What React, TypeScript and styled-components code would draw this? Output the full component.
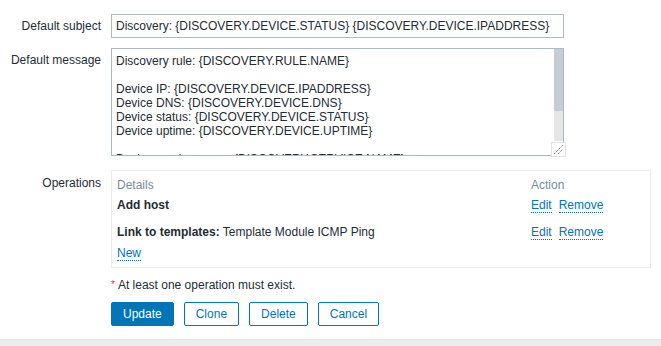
import React from 'react';
import styled, { createGlobalStyle } from 'styled-components';

const GlobalStyle = createGlobalStyle`
  html, body {
    margin: 0;
    padding: 0;
    background: #ffffff;
  }
  body {
    font-family: "Liberation Sans", Arial, sans-serif;
    font-size: 12px;
    color: #1f2c33;
  }
`;

const Page = styled.div`
  display: flex;
  flex-direction: column;
  min-height: 346px;
`;

const FormList = styled.div`
  display: flex;
  flex-direction: column;
  padding-top: 14px;
`;

const Row = styled.div<{ $mb?: number }>`
  display: grid;
  grid-template-columns: 101px 1fr;
  column-gap: 10px;
  margin-bottom: ${(p) => p.$mb ?? 0}px;
`;

const Label = styled.label<{ $pt?: number }>`
  text-align: right;
  line-height: 14px;
  padding-top: ${(p) => p.$pt ?? 5}px;
  white-space: nowrap;
`;

const TextInput = styled.input`
  box-sizing: border-box;
  width: 453px;
  height: 24px;
  margin: 0;
  padding: 0 4px;
  border: 1px solid #acbbc2;
  border-radius: 0;
  font-family: inherit;
  font-size: 12px;
  color: #1f2c33;
  background: #fff;
  outline: none;
`;

const TextAreaFrame = styled.div`
  position: relative;
  display: flex;
  box-sizing: border-box;
  width: 453px;
  height: 108px;
  border: 1px solid #acbbc2;
  background: #fff;
`;

const TextArea = styled.textarea`
  flex: 1;
  min-width: 0;
  margin: 0;
  padding: 5px 4px;
  border: none;
  font-family: inherit;
  font-size: 12px;
  line-height: 14px;
  color: #1f2c33;
  background: transparent;
  overflow: hidden;
  resize: none;
  outline: none;
`;

const ScrollBar = styled.div`
  display: flex;
  flex-direction: column;
  width: 9px;
`;

const ScrollThumb = styled.div`
  height: 62px;
  background: #c3ced5;
`;

const ScrollTrack = styled.div`
  flex: 1;
  background: #e6e6e6;
`;

const ScrollCorner = styled.div`
  height: 14px;
  background: #fff;
`;

const Resizer = styled.div`
  position: absolute;
  right: -3px;
  bottom: -2px;
  width: 15px;
  height: 15px;
  box-sizing: border-box;
  border: 1px solid #e4e4e4;
  background: #fff;
  display: flex;
  align-items: center;
  justify-content: center;
`;

const OpsBox = styled.div`
  box-sizing: border-box;
  width: 540px;
  border: 1px solid #ebeef0;
  padding: 4px 5px 3px 5px;
`;

const OpsRow = styled.div<{ $mt?: number }>`
  display: grid;
  grid-template-columns: 414px 1fr;
  line-height: 14px;
  padding: 3px 0;
  margin-top: ${(p) => p.$mt ?? 0}px;
`;

const HeadCell = styled.div`
  color: #768d99;
`;

const Bold = styled.b`
  font-weight: bold;
`;

const Actions = styled.div`
  display: flex;
  gap: 7px;
`;

const Link = styled.a`
  color: #0275b8;
  text-decoration: none;
  border-bottom: 1px dotted #0275b8;
  cursor: pointer;
  align-self: flex-start;
`;

const NewLink = styled(Link)`
  justify-self: start;
`;

const Required = styled.div`
  line-height: 14px;
  margin-top: 10px;
  margin-left: 111px;
`;

const Asterisk = styled.span`
  color: #e33734;
  font-size: 10px;
  vertical-align: top;
  margin-right: 3px;
`;

const Buttons = styled.div`
  display: flex;
  gap: 10px;
  margin: 10px 0 0 111px;
`;

const Button = styled.button<{ $primary?: boolean }>`
  box-sizing: border-box;
  height: 24px;
  padding: 0 11px;
  border: 1px solid #0275b8;
  border-radius: 2px;
  background: ${(p) => (p.$primary ? '#0275b8' : '#ffffff')};
  color: ${(p) => (p.$primary ? '#ffffff' : '#0275b8')};
  font-family: inherit;
  font-size: 12px;
  cursor: pointer;
`;

const Footer = styled.div`
  flex: 1;
  margin-top: 13px;
  background: #ebeef0;
  border-top: 1px solid #e3e7ea;
`;

const message = [
  'Discovery rule: {DISCOVERY.RULE.NAME}',
  '',
  'Device IP: {DISCOVERY.DEVICE.IPADDRESS}',
  'Device DNS: {DISCOVERY.DEVICE.DNS}',
  'Device status: {DISCOVERY.DEVICE.STATUS}',
  'Device uptime: {DISCOVERY.DEVICE.UPTIME}',
  '',
  'Device service name: {DISCOVERY.SERVICE.NAME}',
  'Device service port: {DISCOVERY.SERVICE.PORT}',
  'Device service status: {DISCOVERY.SERVICE.STATUS}',
  'Device service uptime: {DISCOVERY.SERVICE.UPTIME}',
].join('\n');

const ResizeGrip = () => (
  <svg width="11" height="11" viewBox="0 0 11 11">
    <path d="M1 10 L10 1 M5 10 L10 5" stroke="#7a7a7a" strokeWidth="1" strokeDasharray="1.5 0.8" fill="none" />
  </svg>
);

const App: React.FC = () => {
  return (
    <Page>
      <GlobalStyle />
      <FormList>
        <Row $mb={10}>
          <Label htmlFor="subject">Default subject</Label>
          <TextInput
            id="subject"
            type="text"
            defaultValue="Discovery: {DISCOVERY.DEVICE.STATUS} {DISCOVERY.DEVICE.IPADDRESS}"
          />
        </Row>
        <Row $mb={14}>
          <Label htmlFor="message">Default message</Label>
          <TextAreaFrame>
            <TextArea id="message" defaultValue={message} spellCheck={false} />
            <ScrollBar>
              <ScrollThumb />
              <ScrollTrack />
              <ScrollCorner />
            </ScrollBar>
            <Resizer>
              <ResizeGrip />
            </Resizer>
          </TextAreaFrame>
        </Row>
        <Row>
          <Label $pt={6}>Operations</Label>
          <OpsBox>
            <OpsRow>
              <HeadCell>Details</HeadCell>
              <HeadCell>Action</HeadCell>
            </OpsRow>
            <OpsRow>
              <Bold>Add host</Bold>
              <Actions>
                <Link>Edit</Link>
                <Link>Remove</Link>
              </Actions>
            </OpsRow>
            <OpsRow $mt={6}>
              <div>
                <Bold>Link to templates:</Bold> Template Module ICMP Ping
              </div>
              <Actions>
                <Link>Edit</Link>
                <Link>Remove</Link>
              </Actions>
            </OpsRow>
            <OpsRow>
              <NewLink>New</NewLink>
            </OpsRow>
          </OpsBox>
        </Row>
      </FormList>
      <Required>
        <Asterisk>*</Asterisk>At least one operation must exist.
      </Required>
      <Buttons>
        <Button $primary>Update</Button>
        <Button>Clone</Button>
        <Button>Delete</Button>
        <Button>Cancel</Button>
      </Buttons>
      <Footer />
    </Page>
  );
};

export default App;
